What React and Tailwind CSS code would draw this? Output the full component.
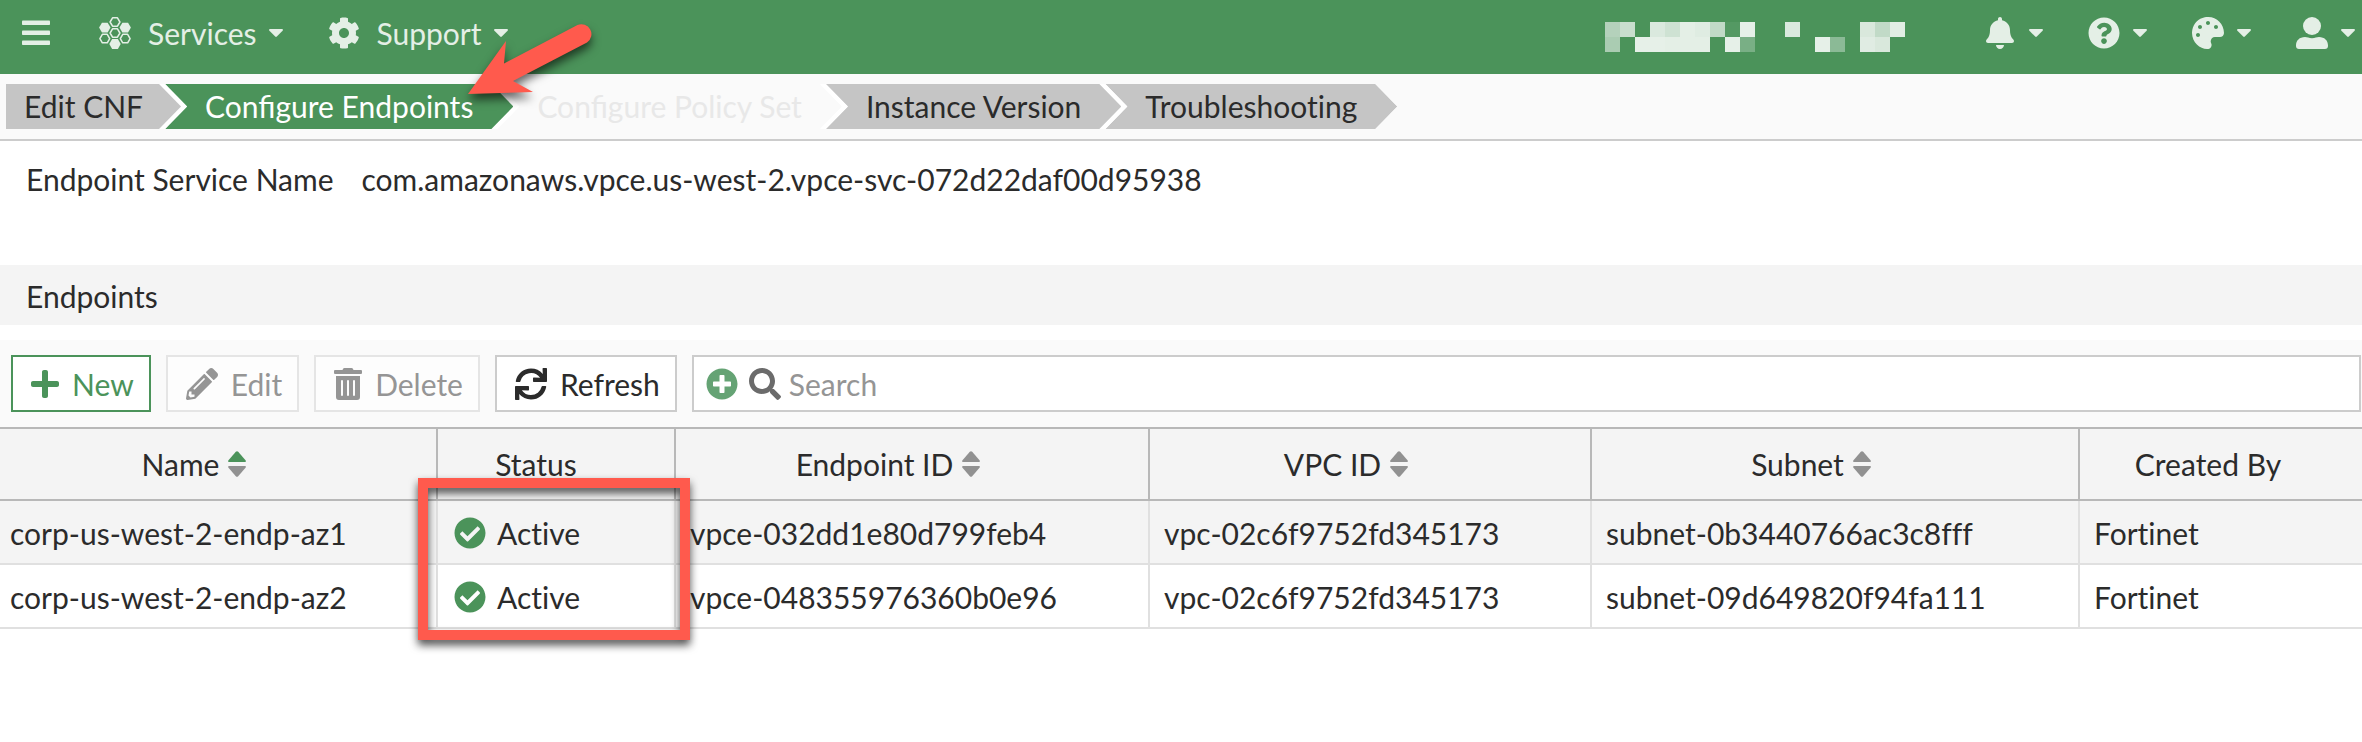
import React from "react";
import {
  FaCog,
  FaBell,
  FaQuestionCircle,
  FaPalette,
  FaPlus,
  FaPencilAlt,
  FaTrashAlt,
  FaSync,
  FaPlusCircle,
  FaSearch,
  FaCheckCircle,
} from "react-icons/fa";

const Caret = () => (
  <svg viewBox="0 0 14 8" className="h-2 w-[14px] shrink-0" fill="currentColor" aria-hidden="true">
    <path d="M1 0H13C14 0 14.2 1 13.6 1.7L7.8 7.6Q7 8.3 6.2 7.6L.4 1.7C-.2 1 0 0 1 0Z" />
  </svg>
);

const MenuIcon = () => (
  <svg viewBox="0 0 28 26" className="h-[26px] w-7" fill="currentColor" aria-hidden="true">
    <rect y="0.5" width="28" height="4.6" rx="0.8" />
    <rect y="10.5" width="28" height="4.6" rx="0.8" />
    <rect y="20.5" width="28" height="4.6" rx="0.8" />
  </svg>
);

const hexPoints = (cx, cy, r) =>
  [0, 60, 120, 180, 240, 300]
    .map((a) => {
      const t = (a * Math.PI) / 180;
      return `${(cx + r * Math.cos(t)).toFixed(2)},${(cy + r * Math.sin(t)).toFixed(2)}`;
    })
    .join(" ");

const HEXES = [
  [16, 5, false],
  [5.8, 10.6, true],
  [26.2, 10.6, true],
  [16, 16, false],
  [5.8, 21.6, false],
  [26.2, 21.6, false],
  [16, 27, true],
];

const HexIcon = () => (
  <svg viewBox="0 0 32 32" className="size-8 shrink-0" aria-hidden="true">
    {HEXES.map(([x, y, filled]) => (
      <polygon
        key={`${x}-${y}`}
        points={hexPoints(x, y, filled ? 5.7 : 4.9)}
        fill={filled ? "currentColor" : "none"}
        stroke={filled ? "none" : "currentColor"}
        strokeWidth="1.5"
        strokeLinejoin="round"
      />
    ))}
  </svg>
);

const UserIcon = () => (
  <svg viewBox="0 0 32 32" className="size-8" fill="currentColor" aria-hidden="true">
    <circle cx="16" cy="9" r="9" />
    <path d="M9 20c2 0 4 1.2 7 1.2S21 20 23 20c5.500 0 9 3.500 9 8.500V29c0 1.800-1.200 3-3 3H3c-1.800 0-3-1.200-3-3v-.5C0 23.500 3.500 20 9 20Z" />
  </svg>
);

const SortIcon = ({ active }) => (
  <svg viewBox="0 0 18 26" className="h-[26px] w-[18px] shrink-0" aria-hidden="true">
    <path d="M7.800.8Q9-.5 10.200.8L17.500 9.300C18.300 10.300 17.900 11 16.700 11H1.300C.1 11-.3 10.300.5 9.300Z" fill={active ? "#4b935a" : "#919191"} />
    <path d="M7.800 25.200Q9 26.500 10.200 25.200L17.500 16.700C18.300 15.700 17.900 15 16.700 15H1.300C.1 15-.3 15.700.5 16.700Z" fill="#919191" />
  </svg>
);

const MOSAIC = [
  [0, 0, "#b4d1bb"], [1, 0, "#c9dece"], [3, 0, "#dae9de"], [4, 0, "#cee2d3"], [5, 0, "#e4efe6"],
  [6, 0, "#dfece2"], [7, 0, "#c1dac7"], [8, 0, "#549963"], [9, 0, "#e6f0e8"], [12, 0, "#dae9de"],
  [17, 0, "#d9e8dc"], [18, 0, "#c1dac7"], [19, 0, "#e2eee4"],
  [0, 1, "#aaccb2"], [2, 1, "#e6f0e8"], [3, 1, "#e6f0e8"], [4, 1, "#e4efe6"], [5, 1, "#e4efe6"],
  [6, 1, "#e4efe6"], [8, 1, "#e6f0e8"], [9, 1, "#79af85"], [14, 1, "#e6f0e8"], [15, 1, "#8bba96"],
  [17, 1, "#e0ece3"], [18, 1, "#d9e8dc"],
];

const Mosaic = () => (
  <svg viewBox="0 0 300 30" className="h-[30px] w-[300px] shrink-0" shapeRendering="crispEdges" aria-hidden="true">
    {MOSAIC.map(([c, r, fill]) => (
      <rect key={`${c}-${r}`} x={c * 15} y={r * 15} width="15" height="15" fill={fill} />
    ))}
  </svg>
);

const TOOLS = [
  ["Notifications", <FaBell className="size-8" />],
  ["Help", <FaQuestionCircle className="size-8" />],
  ["Theme", <FaPalette className="size-8" />],
  ["Account", <UserIcon />],
];

const STEPS = [
  ["Edit CNF", "default"],
  ["Configure Endpoints", "active"],
  ["Configure Policy Set", "disabled"],
  ["Instance Version", "default"],
  ["Troubleshooting", "default"],
];

const STEP_STYLES = {
  default: "bg-[#c5c5c5] text-[#2b2b2b]",
  active: "bg-[#4b935a] text-white [font-variant-ligatures:normal]",
  disabled: "bg-[#fafafa] text-[#e8e8e8] [font-variant-ligatures:normal]",
};

const FLAT = "[clip-path:polygon(0_0,calc(100%-22px)_0,100%_50%,calc(100%-22px)_100%,0_100%)]";
const NOTCHED = "[clip-path:polygon(0_0,calc(100%-22px)_0,100%_50%,calc(100%-22px)_100%,0_100%,22px_50%)]";

const Step = ({ label, kind, first, last }) => (
  <li className={`${first ? FLAT : `-ml-[22px] ${NOTCHED}`} ${last ? "" : "bg-white pr-[6px]"}`}>
    <a
      href="#"
      aria-current={kind === "active" ? "step" : undefined}
      aria-disabled={kind === "disabled" ? true : undefined}
      className={`flex h-[45px] items-center whitespace-nowrap pb-[2px] ${first ? `pr-[38px] pl-[18px] ${FLAT}` : `px-10 ${NOTCHED}`} ${STEP_STYLES[kind]}`}
    >
      {label}
    </a>
  </li>
);

const BUTTON = "flex h-[57px] shrink-0 items-center gap-[13px] border-2 pr-[15px] pl-[18px]";

const COLUMNS = [
  ["Name", "w-[438px]", "active"],
  ["Status", "w-[238px]", null],
  ["Endpoint ID", "w-[474px]", "idle"],
  ["VPC ID", "w-[442px]", "idle"],
  ["Subnet", "w-[488px]", "idle"],
  ["Created By", "", null],
];

const ROWS = [
  ["corp-us-west-2-endp-az1", "vpce-032dd1e80d799feb4", "vpc-02c6f9752fd345173", "subnet-0b3440766ac3c8fff", "Fortinet"],
  ["corp-us-west-2-endp-az2", "vpce-048355976360b0e96", "vpc-02c6f9752fd345173", "subnet-09d649820f94fa111", "Fortinet"],
];

const CELL = "h-16 border-b-2 border-[#e0e0e0] pt-[2px] whitespace-nowrap";

export default function App() {
  return (
    <div className="relative min-h-screen overflow-hidden bg-white font-['Lato',sans-serif] text-[30px] leading-9 text-[#2b2b2b] [font-variant-ligatures:none]">
      <header className="flex h-[74px] items-center bg-[#4b935a] pr-[7px] pb-2 pl-[22px] text-[#e4efe6]">
        <button type="button" aria-label="Menu">
          <MenuIcon />
        </button>
        <nav className="flex items-center" aria-label="Main">
          <button type="button" className="ml-[49px] flex items-center gap-3">
            <HexIcon />
            <span className="ml-[5px]">Services</span>
            <Caret />
          </button>
          <button type="button" className="ml-[45px] flex items-center gap-3">
            <FaCog className="size-8" />
            <span className="ml-[5px]">Support</span>
            <Caret />
          </button>
        </nav>
        <div className="ml-auto flex items-center">
          <div className="mr-[79px] pt-2">
            <Mosaic />
          </div>
          <div className="flex items-center gap-[45px]">
            {TOOLS.map(([label, icon]) => (
              <button key={label} type="button" aria-label={label} className="flex items-center gap-[13px]">
                {icon}
                <Caret />
              </button>
            ))}
          </div>
        </div>
      </header>

      <nav aria-label="Steps" className="border-b-2 border-[#cccccc] bg-[#fafafa] py-[10px] pl-[6px]">
        <ol className="flex">
          {STEPS.map(([label, kind], i) => (
            <Step key={label} label={label} kind={kind} first={i === 0} last={i === STEPS.length - 1} />
          ))}
        </ol>
      </nav>

      <main>
        <dl className="flex gap-7 px-[26px] pt-5 pb-[68px]">
          <dt>Endpoint Service Name</dt>
          <dd>com.amazonaws.vpce.us-west-2.vpce-svc-072d22daf00d95938</dd>
        </dl>

        <h2 className="mb-[15px] flex h-[60px] items-center bg-[#f4f4f4] px-[26px] pt-[2px]">Endpoints</h2>

        <div className="flex gap-[15px] bg-[#fafafa] py-[15px] pr-px pl-[11px]">
          <button type="button" className={`${BUTTON} border-[#4b935a] bg-white text-[#4b935a]`}>
            <FaPlus className="h-8 w-7" />
            New
          </button>
          <button type="button" disabled className={`${BUTTON} border-[#e5e5e5] bg-[#fdfdfd] text-[#959595]`}>
            <FaPencilAlt className="size-8" />
            Edit
          </button>
          <button type="button" disabled className={`${BUTTON} border-[#e5e5e5] bg-[#fdfdfd] text-[#959595]`}>
            <FaTrashAlt className="h-8 w-7" />
            Delete
          </button>
          <button type="button" className={`${BUTTON} border-[#cccccc] bg-white`}>
            <FaSync className="size-8" />
            Refresh
          </button>
          <div className="flex h-[57px] min-w-0 grow items-center border-2 border-[#cccccc] bg-white pl-3">
            <button type="button" aria-label="Add filter" className="text-[#65a374]">
              <FaPlusCircle className="size-8" />
            </button>
            <label htmlFor="search" aria-label="Search" className="ml-[11px] text-[#6b6b6b]">
              <FaSearch className="size-8" />
            </label>
            <input
              id="search"
              type="text"
              placeholder="Search"
              className="ml-2 min-w-0 grow bg-transparent outline-none placeholder:text-[#959595]"
            />
          </div>
        </div>

        <div className="relative">
          <table className="w-full table-fixed border-separate border-spacing-0">
            <thead>
              <tr className="bg-[#f4f4f4]">
                {COLUMNS.map(([label, width, sort], i) => (
                  <th
                    key={label}
                    scope="col"
                    className={`h-[74px] border-y-2 border-[#b8b8b8] font-normal ${width} ${i < 5 ? "border-r-2" : ""} ${sort ? "pr-12" : i === 5 ? "pr-[26px]" : "pr-10"}`}
                  >
                    <span className="flex items-center justify-center gap-[9px] whitespace-nowrap">
                      {label}
                      {sort && <SortIcon active={sort === "active"} />}
                    </span>
                  </th>
                ))}
              </tr>
            </thead>
            <tbody>
              {ROWS.map(([name, ...rest], r) => (
                <tr key={name} className={r % 2 ? "bg-white" : "bg-[#f4f4f4]"}>
                  <td className={`${CELL} border-r-2 pl-[10px]`}>{name}</td>
                  <td className={`${CELL} border-r-2 pl-4`}>
                    <span className="flex items-center gap-[11px]">
                      <FaCheckCircle className="size-8 text-[#4b935a]" />
                      Active
                    </span>
                  </td>
                  {rest.map((value, i) => (
                    <td key={i} className={`${CELL} pl-[14px] ${i < 3 ? "border-r-2" : ""}`}>
                      {value}
                    </td>
                  ))}
                </tr>
              ))}
            </tbody>
          </table>
          <div className="pointer-events-none absolute top-[51px] left-[418px] h-[162px] w-[272px] border-[10px] border-[#ff5a4d] drop-shadow-[0_5px_4px_rgba(0,0,0,0.7)]" />
        </div>
      </main>

      <svg
        viewBox="0 0 140 90"
        className="pointer-events-none absolute top-[18px] left-[460px] h-[90px] w-[140px] overflow-visible drop-shadow-[0_6px_5px_rgba(0,0,0,0.6)]"
        aria-hidden="true"
      >
        <path d="M8 76 46 23 44 45.500 117.500 7A10 10 0 0 1 127 24.500L53 63 73 74Z" fill="#ff5a4d" />
      </svg>
    </div>
  );
}
